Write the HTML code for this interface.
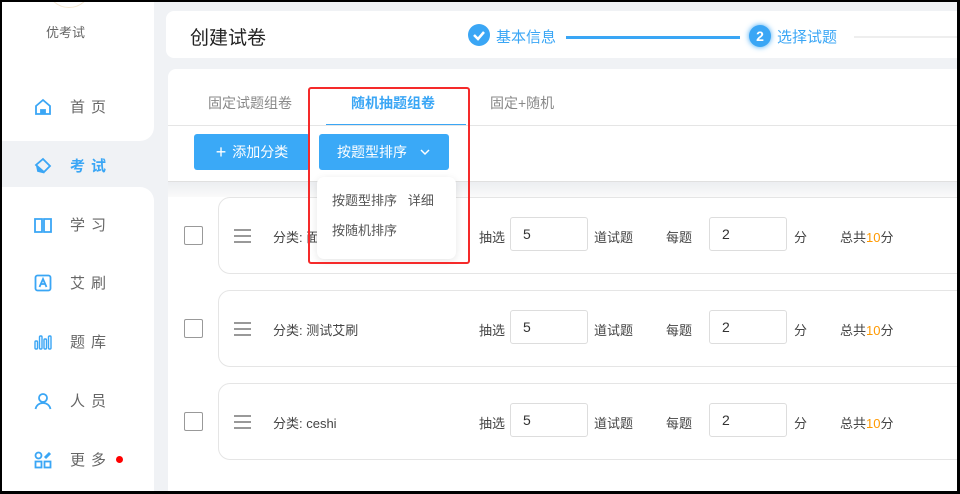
<!DOCTYPE html>
<html><head><meta charset="utf-8"><style>
*{margin:0;padding:0;box-sizing:border-box}
body{width:960px;height:494px;overflow:hidden;background:#000;font-family:"Liberation Sans","Noto Sans CJK SC",sans-serif;position:relative}
.frame{position:absolute;left:2px;top:2px;width:955px;height:489px;background:#f0f2f5;overflow:hidden}
.side{position:absolute;left:0;top:0;width:152px;height:489px;background:#f0f2f5}
.w1{position:absolute;left:0;top:0;width:152px;height:139px;background:#fff;border-bottom-right-radius:14px}
.w2{position:absolute;left:0;top:185px;width:152px;height:304px;background:#fff;border-top-right-radius:14px}
.act{position:absolute;left:3px;top:139px;width:149px;height:46px;background:#f0f2f5;border-radius:23px 0 0 23px}
.logo{position:absolute;left:44px;top:-40px;width:46px;height:46px;border-radius:50%;border:1px solid #f3e6d0}
.brand{position:absolute;left:44px;top:20px;font-size:13px;color:#666}
.nav{position:absolute;left:32px;font-size:15px;color:#666;letter-spacing:6px;display:flex;align-items:center}
.nav svg{width:18px;height:18px;margin-right:18px}
.nav.a{color:#3aa6f5;font-weight:bold}
.hdr{position:absolute;left:164px;top:9px;width:800px;height:47px;background:#fff;border-radius:8px}
.title{position:absolute;left:24px;top:12px;font-size:19px;color:#222}
.card{position:absolute;left:166px;top:67px;width:800px;height:430px;background:#fff;border-radius:8px}
.tab{position:absolute;top:24px;font-size:14px;color:#888}
.btn{position:absolute;top:65px;height:36px;background:#3aa9f7;color:#fff;font-size:14px;border-radius:3px;display:flex;align-items:center;justify-content:center}
.row{position:absolute;left:50px;width:760px;height:77px;border:1px solid #e5e5e5;border-radius:12px;background:#fff}
.cb{position:absolute;left:16px;width:19px;height:19px;border:1px solid #999;border-radius:2px;background:#fff}
.ham{position:absolute;left:66px;width:17px}
.ham i{display:block;height:2px;background:#999;margin-bottom:4px}
.t{position:absolute;font-size:13px;color:#444;white-space:nowrap}
.inp{position:absolute;width:78px;height:34px;border:1px solid #ddd;border-radius:3px;font-size:14px;color:#333;padding:8px 12px}
.dd{position:absolute;left:315px;top:175px;width:139px;height:82px;background:#fff;border-radius:7px;box-shadow:0 2px 8px rgba(0,0,0,.1);font-size:13px;color:#555}
.red{position:absolute;left:306px;top:85px;width:162px;height:177px;border:2.5px solid #f52a2a;border-radius:3px}
</style></head><body>
<div class="frame">
<div class="side"><div class="w1"></div><div class="w2"></div><div class="act"></div>
<div class="logo"></div><div class="brand">优考试</div>
<div class="nav" style="top:94px"><svg viewBox="0 0 18 18" fill="none" stroke="#3aa6f5" stroke-width="1.8"><path d="M2 8L9 2l7 6v8H2z"/><path d="M7 16v-4h4v4" fill="#3aa6f5"/></svg>首页</div>
<div class="nav a" style="top:153px"><svg viewBox="0 0 18 18" fill="none" stroke="#3aa6f5" stroke-width="1.8"><path d="M9 2l7 7-6 6-8-7z"/><path d="M3 9l5 6-4-1z" fill="#3aa6f5"/></svg>考试</div>
<div class="nav" style="top:212px"><svg viewBox="0 0 18 18" fill="none" stroke="#3aa6f5" stroke-width="1.8"><path d="M1 3h7v13H1zM10 3h7v13h-7z"/></svg>学习</div>
<div class="nav" style="top:270px"><svg viewBox="0 0 18 18" fill="none" stroke="#3aa6f5" stroke-width="1.8"><rect x="1.5" y="1.5" width="15" height="15" rx="2"/><path d="M5.5 13L9 5l3.5 8M7 10h4"/></svg>艾刷</div>
<div class="nav" style="top:329px"><svg viewBox="0 0 18 18" fill="none" stroke="#3aa6f5" stroke-width="1.4"><rect x="1" y="8" width="2.5" height="8" rx="1"/><rect x="5.5" y="3" width="2.5" height="13" rx="1"/><rect x="10" y="6" width="2.5" height="10" rx="1"/><rect x="14.5" y="3" width="2.5" height="13" rx="1"/></svg>题库</div>
<div class="nav" style="top:388px"><svg viewBox="0 0 18 18" fill="none" stroke="#3aa6f5" stroke-width="1.8"><circle cx="9" cy="6" r="4"/><path d="M1.5 17c1-4 4-6 7.5-6s6.5 2 7.5 6"/></svg>人员</div>
<div class="nav" style="top:447px"><svg viewBox="0 0 18 18" fill="none" stroke="#3aa6f5" stroke-width="1.8"><circle cx="4.5" cy="4.5" r="3"/><rect x="1.5" y="10.5" width="6" height="6"/><rect x="10.5" y="10.5" width="6" height="6"/><path d="M11 7l5-5" stroke-width="3"/></svg>更多<span style="width:7px;height:7px;border-radius:50%;background:#f00;display:inline-block;margin-left:4px"></span></div>
</div>
<div class="hdr"><div class="title">创建试卷</div>
<div style="position:absolute;left:302px;top:13px;width:22px;height:22px;border-radius:50%;background:#3aa6f5"><svg viewBox="0 0 22 22" width="22" height="22"><path d="M6 11l4 4 6-7" stroke="#fff" stroke-width="2.5" fill="none"/></svg></div>
<div style="position:absolute;left:330px;top:15px;font-size:15px;color:#3aa6f5">基本信息</div>
<div style="position:absolute;left:400px;top:25px;width:174px;height:3px;background:#3aa6f5"></div>
<div style="position:absolute;left:583px;top:14px;width:22px;height:22px;border-radius:50%;background:#3aa6f5;box-shadow:0 0 6px #3aa6f5;color:#fff;font-size:14px;font-weight:bold;text-align:center;line-height:22px">2</div>
<div style="position:absolute;left:611px;top:15px;font-size:15px;color:#3aa6f5">选择试题</div>
<div style="position:absolute;left:688px;top:25px;width:120px;height:2px;background:#eee"></div>
</div>
<div class="card">
<div class="tab" style="left:40px">固定试题组卷</div>
<div class="tab" style="left:183px;color:#3aa6f5;font-weight:bold">随机抽题组卷</div>
<div style="position:absolute;left:158px;top:55px;width:140px;height:2px;background:#3aa6f5"></div>
<div class="tab" style="left:322px">固定+随机</div>
<div style="position:absolute;left:0;top:56px;width:800px;height:1px;background:#e5e5e5"></div>
<div class="btn" style="left:26px;width:116px"><span style="font-size:18px;margin-right:6px">+</span>添加分类</div>
<div class="btn" style="left:151px;width:130px">按题型排序<svg width="12" height="8" style="margin-left:12px" viewBox="0 0 12 8"><path d="M2 2l4 4 4-4" stroke="#fff" stroke-width="1.5" fill="none"/></svg></div>
<div style="position:absolute;left:0;top:112px;width:800px;height:16px;background:linear-gradient(#eceef1,#fafafa);border-top:1px solid #e0e0e0"></div>
<div class="row" style="top:128px"></div>
<div class="row" style="top:221px"></div>
<div class="row" style="top:314px"></div>
</div>
<div class="cb" style="left:182px;top:224px"></div>
<div class="ham" style="left:232px;top:227px"><i></i><i></i><i></i></div>
<div class="t" style="left:271px;top:225px">分类: 面</div>
<div class="t" style="left:477px;top:225px">抽选</div><div class="inp" style="left:508px;top:215px">5</div>
<div class="t" style="left:592px;top:225px">道试题</div><div class="t" style="left:664px;top:225px">每题</div>
<div class="inp" style="left:707px;top:215px">2</div><div class="t" style="left:792px;top:225px">分</div>
<div class="t" style="left:838px;top:225px">总共<span style="color:#f90">10</span>分</div>

<div class="cb" style="left:182px;top:317px"></div>
<div class="ham" style="left:232px;top:320px"><i></i><i></i><i></i></div>
<div class="t" style="left:271px;top:318px">分类: 测试艾刷</div>
<div class="t" style="left:477px;top:318px">抽选</div><div class="inp" style="left:508px;top:308px">5</div>
<div class="t" style="left:592px;top:318px">道试题</div><div class="t" style="left:664px;top:318px">每题</div>
<div class="inp" style="left:707px;top:308px">2</div><div class="t" style="left:792px;top:318px">分</div>
<div class="t" style="left:838px;top:318px">总共<span style="color:#f90">10</span>分</div>

<div class="cb" style="left:182px;top:410px"></div>
<div class="ham" style="left:232px;top:413px"><i></i><i></i><i></i></div>
<div class="t" style="left:271px;top:411px">分类: ceshi</div>
<div class="t" style="left:477px;top:411px">抽选</div><div class="inp" style="left:508px;top:401px">5</div>
<div class="t" style="left:592px;top:411px">道试题</div><div class="t" style="left:664px;top:411px">每题</div>
<div class="inp" style="left:707px;top:401px">2</div><div class="t" style="left:792px;top:411px">分</div>
<div class="t" style="left:838px;top:411px">总共<span style="color:#f90">10</span>分</div>

<div class="dd"><div style="position:absolute;left:15px;top:13px">按题型排序&nbsp;&nbsp;&nbsp;详细</div><div style="position:absolute;left:15px;top:43px">按随机排序</div></div>
<div class="red"></div>
</div>
</body></html>
